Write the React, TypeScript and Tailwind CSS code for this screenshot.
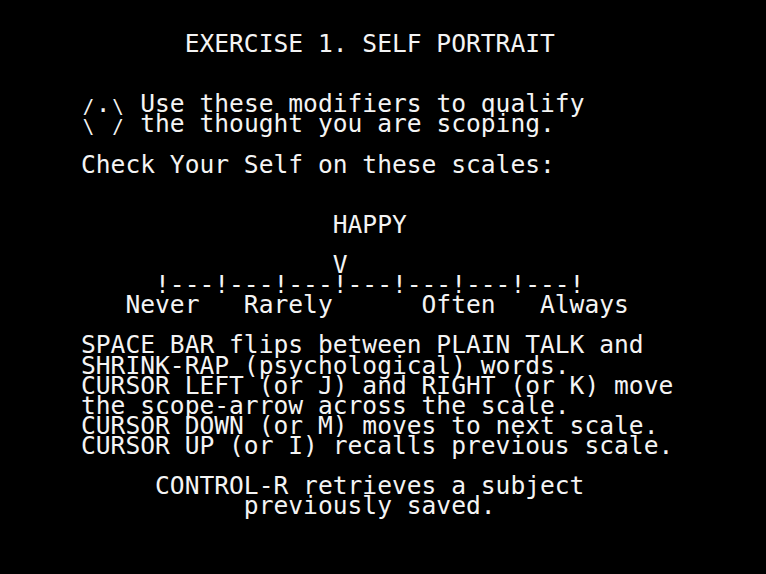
const lines = [
  '       EXERCISE 1. SELF PORTRAIT',
  '',
  '',
  '/.\\ Use these modifiers to qualify',
  '\\ / the thought you are scoping.',
  '',
  'Check Your Self on these scales:',
  '',
  '',
  '                 HAPPY',
  '',
  '                 V',
  '     !---!---!---!---!---!---!---!',
  '   Never   Rarely      Often   Always',
  '',
  'SPACE BAR flips between PLAIN TALK and',
  'SHRINK-RAP (psychological) words.',
  'CURSOR LEFT (or J) and RIGHT (or K) move',
  'the scope-arrow across the scale.',
  'CURSOR DOWN (or M) moves to next scale.',
  'CURSOR UP (or I) recalls previous scale.',
  '',
  '     CONTROL-R retrieves a subject',
  '           previously saved.',
]

// the Apple II slashes are short, so draw them smaller in their own cell
function Line({ text }: { text: string }) {
  const parts = text.split(/([/\\])/)
  return (
    <div className="h-[20.1px] whitespace-pre">
      {parts.map((p, i) =>
        p === '/' || p === '\\' ? (
          <span key={i} className="inline-block w-[14.82px] text-center text-[19px] translate-y-[1px]">
            {p}
          </span>
        ) : (
          <span key={i}>{p}</span>
        )
      )}
    </div>
  )
}

export default function App() {
  return (
    <div className="w-[766px] h-[574px] bg-black overflow-hidden pt-[34px] pl-[81px]">
      <div className="font-['DejaVu_Sans_Mono',monospace] text-[24.6px] leading-[20.1px] text-[#f4f4f4]">
        {lines.map((line, i) => (
          <Line key={i} text={line} />
        ))}
      </div>
    </div>
  )
}
